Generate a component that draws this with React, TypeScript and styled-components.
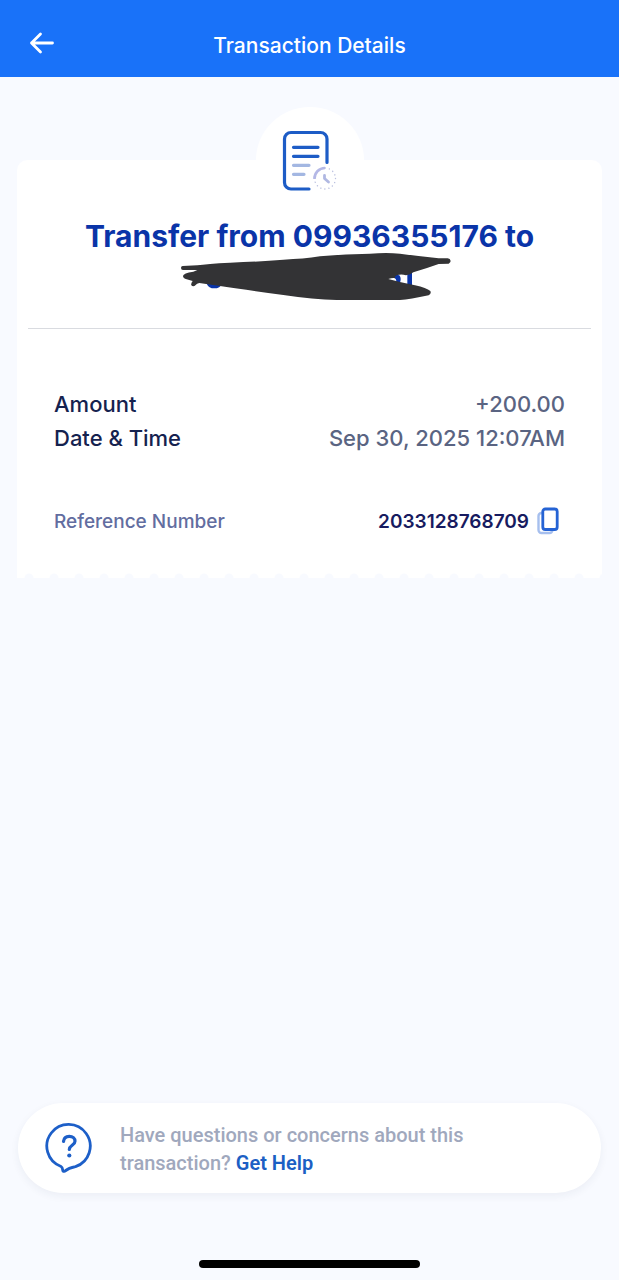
import React from "react";
import styled, { createGlobalStyle } from "styled-components";

const GlobalStyle = createGlobalStyle`
  *, *::before, *::after { box-sizing: border-box; }
  body {
    margin: 0;
    background: #f8faff;
    font-family: Inter, "Liberation Sans", sans-serif;
  }
  button { font: inherit; }
`;

const Screen = styled.div`
  display: flex;
  flex-direction: column;
  min-height: 100vh;
`;

const Header = styled.header`
  display: grid;
  grid-template-columns: 64px 1fr 64px;
  align-items: center;
  padding: 14px 0 0;
  height: 77px;
  background: #1972f9;
  color: #fff;
`;

const IconButton = styled.button`
  display: flex;
  padding: 0;
  border: 0;
  background: none;
  color: inherit;
  cursor: pointer;
`;

const BackButton = styled(IconButton)`
  justify-self: end;
  margin: 0 9px 6px 0;
`;

const Title = styled.h1`
  margin: 0;
  font-size: 21px;
  line-height: 28px;
  font-weight: 500;
  text-align: center;
`;

const Main = styled.main`
  display: flex;
  flex-direction: column;
  padding: 30px 17px 0;
`;

const Badge = styled.div`
  align-self: center;
  width: 108px;
  height: 106px;
  margin-bottom: -53px;
  border-radius: 50%;
  background: #fff;
  z-index: 1;
`;

const Receipt = styled.section`
  padding: 56px 11px 40px;
  border-radius: 10px 10px 0 0;
  background:
    radial-gradient(circle at 12px 8px, #f8faff 4px, transparent 5px) 0 100% / 25px 8px repeat-x,
    #fff;
`;

const Heading = styled.h2`
  display: flex;
  flex-direction: column;
  align-items: center;
  margin: 0;
  color: #0a34a8;
  font-size: 30px;
  line-height: 40px;
  font-weight: 700;
  text-align: center;

  svg { margin-top: -4px; }
`;

const Divider = styled.hr`
  width: 100%;
  height: 0;
  margin: 27px 0 0;
  border: 0;
  border-top: 1px solid #d9dbe0;
`;

const Details = styled.dl`
  margin: 0;
  padding: 58px 26px 0;
`;

const Row = styled.div<{ $spaced?: boolean }>`
  display: flex;
  justify-content: space-between;
  align-items: center;
  height: 34px;
  margin-top: ${(p) => (p.$spaced ? 49 : 0)}px;
`;

const Label = styled.dt<{ $muted?: boolean }>`
  color: ${(p) => (p.$muted ? "#626da0" : "#15224f")};
  font-size: ${(p) => (p.$muted ? 19 : 22)}px;
  font-weight: 500;
`;

const Value = styled.dd<{ $strong?: boolean }>`
  display: flex;
  align-items: center;
  gap: 8px;
  margin: 0;
  padding-right: ${(p) => (p.$strong ? 6 : 0)}px;
  color: ${(p) => (p.$strong ? "#171b60" : "#5a6482")};
  font-size: ${(p) => (p.$strong ? 19 : 22)}px;
  font-weight: ${(p) => (p.$strong ? 600 : 500)};
`;

const Footer = styled.footer`
  display: flex;
  flex-direction: column;
  align-items: center;
  margin-top: auto;
  padding: 24px 18px 12px;
`;

const HelpCard = styled.aside`
  display: flex;
  align-items: center;
  gap: 27px;
  width: 100%;
  min-height: 90px;
  padding: 8px 27px;
  border-radius: 45px;
  background: #fff;
  box-shadow: 0 3px 8px rgba(30, 50, 90, 0.06);
`;

const HelpText = styled.p`
  margin: 0;
  padding-top: 1px;
  max-width: 360px;
  color: #a0a8bd;
  font-family: Roboto, "Liberation Sans", sans-serif;
  font-size: 20px;
  line-height: 28px;
  font-weight: 500;
`;

const HelpLink = styled.a`
  color: #1c5fc4;
  font-weight: 600;
  text-decoration: none;
`;

const HomeIndicator = styled.div`
  width: 221px;
  height: 8px;
  margin-top: 67px;
  border-radius: 4px;
  background: #000;
`;

const BackIcon = () => (
  <svg width="26" height="22" viewBox="0 0 26 22" fill="none" stroke="currentColor" strokeWidth="2.8" strokeLinecap="round" strokeLinejoin="round" aria-hidden="true">
    <path d="M23.500 11H2.500M11.500 2L2.500 11L11.500 20" />
  </svg>
);

const ReceiptIcon = () => (
  <svg width="106" height="106" viewBox="0 0 106 106" fill="none" strokeWidth="3.2" strokeLinecap="round" aria-hidden="true">
    <path stroke="#1d5cc6" d="M71 55.5V32a6.500 6.500 0 0 0-6.500-6.500H35A6.500 6.500 0 0 0 28.500 32v43.500A6.500 6.500 0 0 0 35 82h18" />
    <path stroke="#1d5cc6" d="M37.500 40.300h24.500M37.500 49.300h24.500" />
    <path stroke="#a3b7e2" d="M37.500 58.300h15.500M37.500 67.300h10.500" />
    <circle cx="69" cy="71.500" r="10.500" stroke="#b9bfdf" strokeWidth="1.400" strokeDasharray="0.100 4.020" />
    <path stroke="#b4b8e6" strokeWidth="2.600" strokeLinecap="butt" d="M58.500 72A10.500 10.500 0 0 1 69 61" />
    <path stroke="#b0b8e2" strokeWidth="2.800" strokeLinejoin="round" d="M68.500 68.500V71.500L72.500 75" />
  </svg>
);

const Scribble = () => (
  <svg width="285" height="49" viewBox="-9 108 855 147" role="img" aria-label="Recipient hidden">
    <path fill="#0a34a8" d="M110 203h46q-6 14-23 14t-23-14zM662 186q12-14 26-8q7 8 2 22h-12q3-10-4-14zM712 165h14v46h-14z" />
    <path
      fill="#333335"
      d="M38 150Q33 150 33 156Q33 162 39 162H82L70 167Q40 171 39 180Q39 187 50 190L68 195Q62 203 64 208Q70 214 77 207Q80 202 88 201L150 210Q230 222 340 237Q430 250 500 252H690Q720 250 776 238Q785 233 781 225Q770 216 735 208Q690 199 655 189Q670 184 676 187Q672 180 682 177Q696 174 708 178Q722 176 730 169Q770 157 806 144L836 143Q842 139 842 135Q841 128 833 127H806Q750 121 690 113Q650 109 600 113Q520 114 450 121Q400 129 340 131Q270 137 180 140Q110 143 82 148Z"
    />
  </svg>
);

const CopyIcon = () => (
  <svg width="22" height="28" viewBox="0 0 22 28" fill="none" aria-hidden="true">
    <rect x="1.500" y="6" width="14" height="20" rx="3" stroke="#a6bfee" strokeWidth="2.400" />
    <rect x="5.800" y="2" width="14.400" height="20.500" rx="2.500" fill="#fff" stroke="#2563d4" strokeWidth="2.800" />
  </svg>
);

const QuestionIcon = () => (
  <svg width="48" height="52" viewBox="0 0 48 52" fill="none" stroke="#1d5fc8" strokeWidth="2.800" strokeLinecap="round" strokeLinejoin="round" aria-hidden="true">
    <path d="M16 44.500A21.700 21.700 0 1 1 30.500 44.700C26 45.500 23 46.500 19.500 49.300C18.300 49.800 17.800 49 17.700 48C17.500 46 17.300 45.200 16 44.500Z" />
    <path strokeWidth="3.200" d="M18.500 19.500C18.800 16 21 14.300 24.300 14.300C27.800 14.300 30 16.300 30 19.200C30 23.300 24.300 23.300 24.300 27.500" />
    <circle cx="24.300" cy="33.500" r="2.100" fill="#1d5fc8" stroke="none" />
  </svg>
);

export default function App() {
  return (
    <Screen>
      <GlobalStyle />
      <Header>
        <BackButton type="button" aria-label="Back">
          <BackIcon />
        </BackButton>
        <Title>Transaction Details</Title>
      </Header>
      <Main>
        <Badge>
          <ReceiptIcon />
        </Badge>
        <Receipt>
          <Heading>
            Transfer from 09936355176 to
            <Scribble />
          </Heading>
          <Divider />
          <Details>
            <Row>
              <Label>Amount</Label>
              <Value>+200.00</Value>
            </Row>
            <Row>
              <Label>Date &amp; Time</Label>
              <Value>Sep 30, 2025 12:07AM</Value>
            </Row>
            <Row $spaced>
              <Label $muted>Reference Number</Label>
              <Value $strong>
                2033128768709
                <IconButton type="button" aria-label="Copy reference number">
                  <CopyIcon />
                </IconButton>
              </Value>
            </Row>
          </Details>
        </Receipt>
      </Main>
      <Footer>
        <HelpCard>
          <QuestionIcon />
          <HelpText>
            Have questions or concerns about this transaction? <HelpLink href="#help">Get Help</HelpLink>
          </HelpText>
        </HelpCard>
        <HomeIndicator />
      </Footer>
    </Screen>
  );
}
